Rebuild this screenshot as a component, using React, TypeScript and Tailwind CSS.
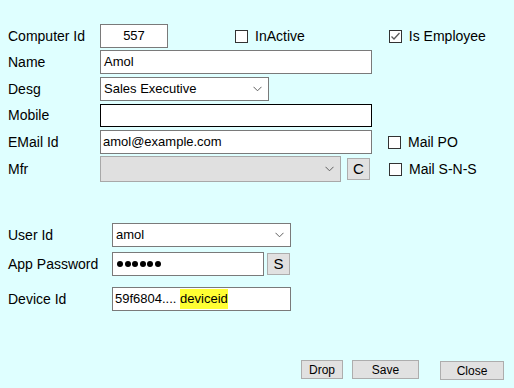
import type { ReactNode } from 'react'

const font = { fontFamily: '"Liberation Sans", Arial, sans-serif' }

function Chevron(): JSX.Element {
  return (
    <svg width="9" height="6" viewBox="0 0 9 6" className="absolute right-[6px] top-1/2 -translate-y-1/2">
      <polyline points="0.5,0.8 4.5,4.8 8.5,0.8" fill="none" stroke="#606060" strokeWidth="1" />
    </svg>
  )
}

function Check({ checked, label }: { checked?: boolean; label: string }): JSX.Element {
  return (
    <div className="flex items-center">
      <div className="w-[13px] h-[13px] border border-[#333333] bg-white flex items-center justify-center">
        {checked && (
          <svg width="11" height="11" viewBox="0 0 11 11">
            <polyline points="1.5,5.5 4,8 9.5,2" fill="none" stroke="#5a5a5a" strokeWidth="1.3" />
          </svg>
        )}
      </div>
      <span className="ml-[7px] text-[14px] text-black">{label}</span>
    </div>
  )
}

function Row({ label, children, className = '', labelW = 'w-[100px]' }: { label: string; children: ReactNode; className?: string; labelW?: string }): JSX.Element {
  return (
    <div className={`flex items-center ${className}`}>
      <div className={`${labelW} pl-[8px] text-[14px] text-black shrink-0 whitespace-nowrap`}>{label}</div>
      {children}
    </div>
  )
}

function SmallBtn({ children }: { children: ReactNode }): JSX.Element {
  return (
    <div className="w-[23px] h-[22px] bg-[#e1e1e1] border border-[#adadad] flex items-center justify-center text-[15px] text-black">
      {children}
    </div>
  )
}

export default function App(): JSX.Element {
  return (
    <div style={font} className="w-[514px] h-[388px] bg-[#dfffff] overflow-hidden relative">
      <div className="pt-[24px]">
        <Row label="Computer Id" className="h-[24px]">
          <div className="w-[68px] h-[24px] bg-white border border-[#7a7a7a] flex items-center justify-center text-[13px]">557</div>
          <div className="ml-[67px]"><Check label="InActive" /></div>
          <div className="ml-[84px]"><Check checked label="Is Employee" /></div>
        </Row>
        <Row label="Name" className="h-[24px] mt-[2px]">
          <div className="w-[272px] h-[24px] bg-white border border-[#7a7a7a] flex items-center pl-[3px] text-[13px]">Amol</div>
        </Row>
        <Row label="Desg" className="h-[24px] mt-[3px]">
          <div className="relative w-[169px] h-[24px] bg-white border border-[#7a7a7a] flex items-center pl-[3px] text-[13px]">
            Sales Executive
            <Chevron />
          </div>
        </Row>
        <Row label="Mobile" className="h-[23px] mt-[3px]">
          <div className="w-[272px] h-[23px] bg-white border border-black" />
        </Row>
        <Row label="EMail Id" className="h-[24px] mt-[3px]">
          <div className="w-[272px] h-[24px] bg-white border border-[#7a7a7a] flex items-center pl-[2px] text-[13px]">amol@example.com</div>
          <div className="ml-[16px]"><Check label="Mail PO" /></div>
        </Row>
        <Row label="Mfr" className="h-[26px] mt-[2px]">
          <div className="relative w-[241px] h-[26px] bg-[#e0e0e0] border border-[#a8a8a8]">
            <Chevron />
          </div>
          <div className="ml-[6px]"><SmallBtn>C</SmallBtn></div>
          <div className="ml-[19px]"><Check label="Mail S-N-S" /></div>
        </Row>

        <Row label="User Id" labelW="w-[112px]" className="h-[24px] mt-[41px]">
          <div className="relative w-[179px] h-[24px] bg-white border border-[#7a7a7a] flex items-center pl-[3px] text-[13px]">
            amol
            <Chevron />
          </div>
        </Row>
        <Row label="App Password" labelW="w-[112px]" className="h-[24px] mt-[5px]">
          <div className="w-[152px] h-[24px] bg-white border border-[#7a7a7a] flex items-center pl-[4px] gap-[1.5px]">
            {[0, 1, 2, 3, 4, 5].map((i) => (
              <span key={i} className="w-[6px] h-[6px] rounded-full bg-black" />
            ))}
          </div>
          <div className="ml-[3px]"><SmallBtn>S</SmallBtn></div>
        </Row>
        <Row label="Device Id" labelW="w-[112px]" className="h-[24px] mt-[11px]">
          <div className="w-[179px] h-[24px] bg-white border border-[#7a7a7a] flex items-center pl-[2px] text-[13px]">
            59f6804....&nbsp;<span className="bg-[#ffff33] pb-[1px]">deviceid</span>
          </div>
        </Row>

        <div className="flex items-start mt-[49px] pl-[301px]">
          <div className="w-[42px] h-[19px] bg-[#e1e1e1] border border-[#adadad] flex items-center justify-center text-[12px]">Drop</div>
          <div className="ml-[9px] w-[67px] h-[19px] bg-[#e1e1e1] border border-[#adadad] flex items-center justify-center text-[12px]">Save</div>
          <div className="ml-[21px] mt-[1px] w-[64px] h-[19px] bg-[#e1e1e1] border border-[#adadad] flex items-center justify-center text-[12px]">Close</div>
        </div>
      </div>
    </div>
  )
}
